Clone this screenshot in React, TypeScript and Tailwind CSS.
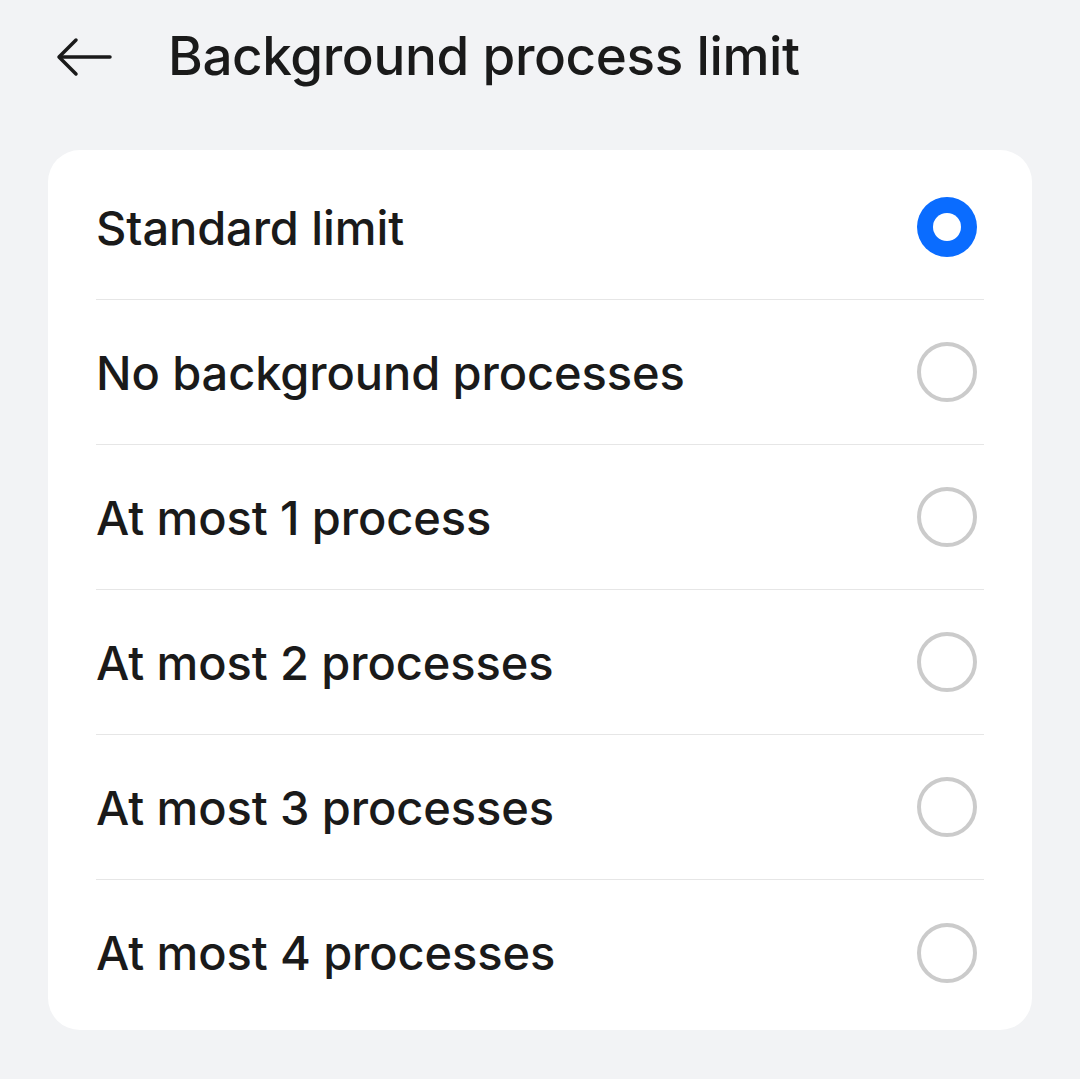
import React from "react";

const options = [
  "Standard limit",
  "No background processes",
  "At most 1 process",
  "At most 2 processes",
  "At most 3 processes",
  "At most 4 processes",
];

function Radio({ checked }: { checked: boolean }) {
  if (checked) {
    return (
      <div className="w-[60px] h-[60px] rounded-full bg-[#0a6cff] flex items-center justify-center">
        <div className="w-[28px] h-[28px] rounded-full bg-white" />
      </div>
    );
  }
  return <div className="w-[60px] h-[60px] rounded-full border-[4px] border-[#cbcbcb]" />;
}

export default function App() {
  return (
    <div
      className="w-[1080px] h-[1079px] bg-[#f2f3f5] text-[#1a1a1a]"
      style={{ fontFamily: "Inter, 'Noto Sans', sans-serif" }}
    >
      <div className="h-[115px] flex items-center pl-[56px] pb-[2px]">
        <svg width="56" height="40" viewBox="0 0 56 40" fill="none" stroke="#1a1a1a" strokeWidth="3.5" strokeLinecap="round" strokeLinejoin="round">
          <path d="M54 20H4" />
          <path d="M20 3L3 20L20 37" />
        </svg>
        <div className="ml-[56px] text-[53px] font-medium tracking-[-0.4px]">Background process limit</div>
      </div>
      <div className="mx-[48px] mt-[35px] bg-white rounded-[32px] py-[5px] px-[48px]">
        {options.map((o, i) => (
          <div
            key={o}
            className={`h-[145px] flex items-center justify-between ${i < options.length - 1 ? "border-b border-[#e6e6e6]" : ""}`}
          >
            <span className="text-[47px] font-[450] tracking-[-0.1px] mt-[2px]">{o}</span>
            <div className="mr-[7px]">
              <Radio checked={i === 0} />
            </div>
          </div>
        ))}
      </div>
    </div>
  );
}
